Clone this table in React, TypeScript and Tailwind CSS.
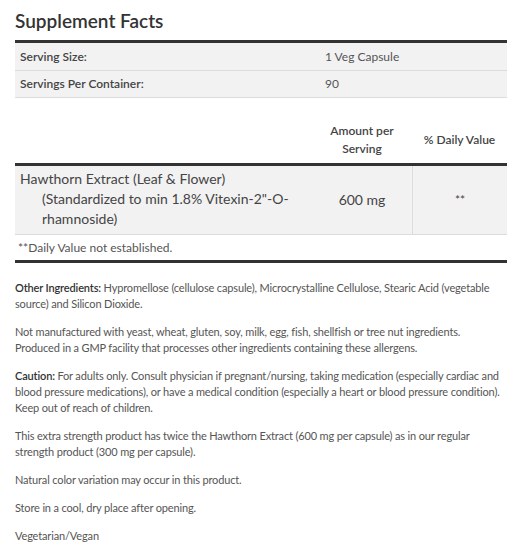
import React from "react";

const notes: { label?: string; text: React.ReactNode }[] = [
  {
    label: "Other Ingredients:",
    text: "Hypromellose (cellulose capsule), Microcrystalline Cellulose, Stearic Acid (vegetable source) and Silicon Dioxide.",
  },
  {
    text: (
      <>
        Not manufactured with yeast, wheat, gluten, soy, milk, egg, fish, shellfish or tree nut ingredients.
        <br />
        Produced in a GMP facility that processes other ingredients containing these allergens.
      </>
    ),
  },
  {
    label: "Caution:",
    text: "For adults only. Consult physician if pregnant/nursing, taking medication (especially cardiac and blood pressure medications), or have a medical condition (especially a heart or blood pressure condition). Keep out of reach of children.",
  },
  {
    text: "This extra strength product has twice the Hawthorn Extract (600 mg per capsule) as in our regular strength product (300 mg per capsule).",
  },
  { text: "Natural color variation may occur in this product." },
  { text: "Store in a cool, dry place after opening." },
  { text: "Vegetarian/Vegan" },
];

export default function App() {
  return (
    <div
      className="bg-white px-[15px] pt-[9px] pb-4 text-[#555] w-[527px]"
      style={{ fontFamily: "Lato, 'Open Sans', sans-serif" }}>
      <h2 className="text-[19px] font-semibold text-[#333] leading-[24px]">Supplement Facts</h2>

      {/* Serving info */}
      <div className="mt-[7px] border-t-[3px] border-[#333] w-[492px]">
        <div className="flex h-[28px] items-center bg-[#f2f2f2] border-b border-[#dcdcdc] text-[12px]">
          <div className="w-[308px] pl-[5px] font-semibold text-[#444]">Serving Size:</div>
          <div className="pl-[2px] text-[#555]">1 Veg Capsule</div>
        </div>
        <div className="flex h-[27px] items-center bg-[#f2f2f2] border-b border-[#dcdcdc] text-[12px]">
          <div className="w-[308px] pl-[5px] font-semibold text-[#444]">Servings Per Container:</div>
          <div className="pl-[2px] text-[#555]">90</div>
        </div>
      </div>

      {/* Ingredients */}
      <div className="mt-[18px] w-[492px]">
        <div className="flex h-[47px] items-center text-[12px] font-semibold text-[#444] leading-[18px]">
          <div className="w-[297px]" />
          <div className="w-[100px] text-center">
            Amount per
            <br />
            Serving
          </div>
          <div className="w-[95px] text-center">% Daily Value</div>
        </div>
        <div className="flex bg-[#f2f2f2] border-t-[3px] border-[#333] border-b border-b-[#dcdcdc] text-[14px] leading-[20px] text-[#444]">
          <div className="w-[297px] pl-[5px] pt-[3px] pb-[5px]">
            Hawthorn Extract (Leaf &amp; Flower)
            <div className="pl-[22px]">(Standardized to min 1.8% Vitexin-2"-O-rhamnoside)</div>
          </div>
          <div className="w-[100px] flex items-center justify-center">600 mg</div>
          <div className="w-[95px] flex items-center justify-center border-l border-[#dcdcdc] text-[12px]">**</div>
        </div>
        <div className="h-[28px] flex items-center pl-[3px] text-[12px] text-[#555] border-b-[3px] border-[#333]">
          **Daily Value not established.
        </div>
      </div>

      {/* Notes */}
      <div className="mt-[17px] flex flex-col gap-[12px] text-[11px] leading-[16px] tracking-[-0.15px] w-[495px]">
        {notes.map((n, i) => (
          <p key={i}>
            {n.label && <span className="font-semibold text-[#333]">{n.label} </span>}
            {n.text}
          </p>
        ))}
      </div>
    </div>
  );
}
